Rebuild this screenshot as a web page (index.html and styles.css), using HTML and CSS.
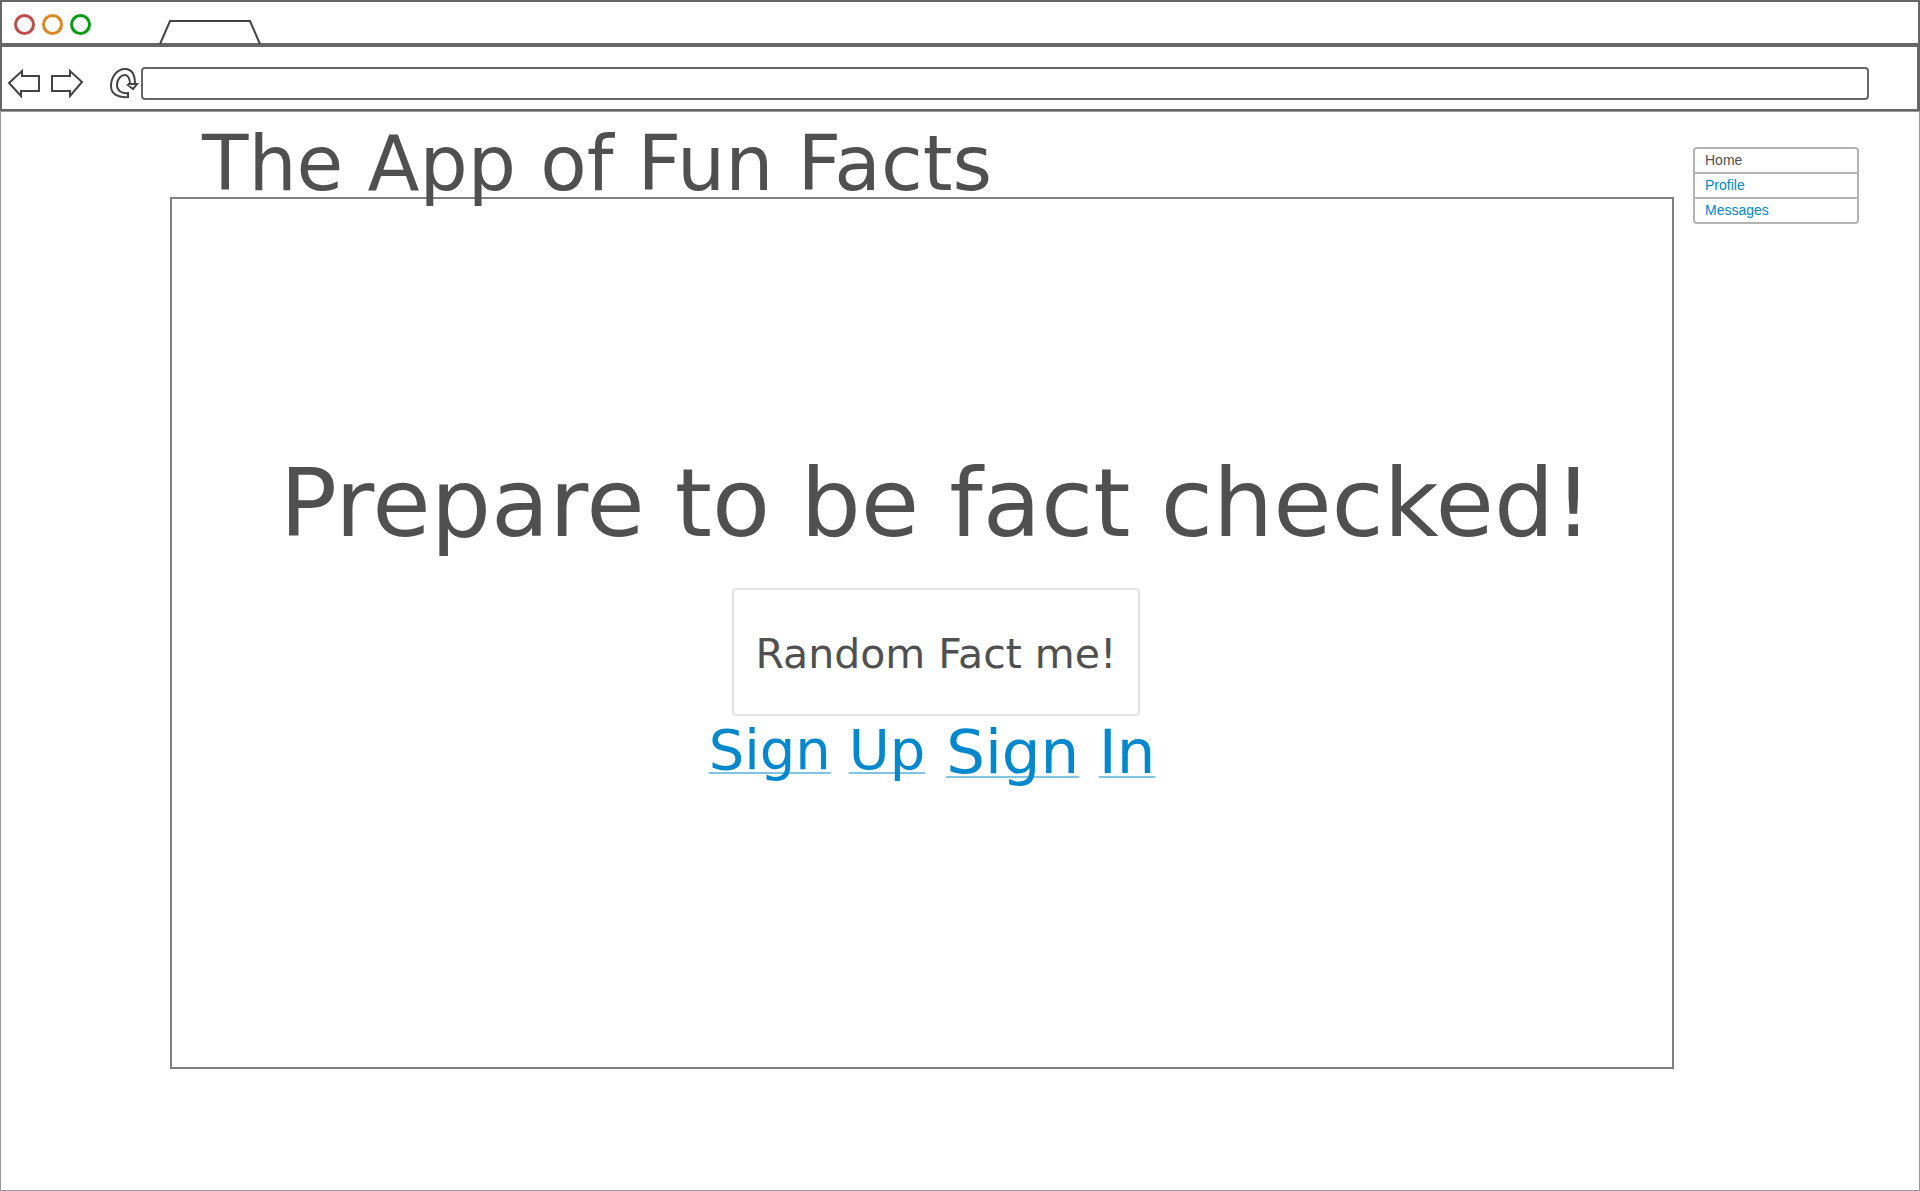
FILE: index.html
```html
<!DOCTYPE html>
<html lang="en">
<head>
<meta charset="utf-8">
<title>The App of Fun Facts</title>
<link rel="stylesheet" href="styles.css">
</head>
<body>
<div class="browser">
  <div class="tab-bar">
    <span class="dot dot-red"></span>
    <span class="dot dot-amber"></span>
    <span class="dot dot-green"></span>
    <svg class="tab" width="104" height="26" viewBox="0 0 104 26" aria-hidden="true"><path d="M2 25 12 2H92L102 25"/></svg>
  </div>
  <div class="toolbar">
    <button class="tool" aria-label="Back"><svg width="34" height="30" viewBox="0 0 34 30"><path d="M2 15 15 3V8H32V23H14V28Z"/></svg></button>
    <button class="tool tool-forward" aria-label="Forward"><svg width="34" height="30" viewBox="0 0 34 30"><path d="M2 8H20V3L32 14 20 28V23H2Z"/></svg></button>
    <button class="tool tool-reload" aria-label="Reload"><svg width="30" height="32" viewBox="0 0 30 32"><path d="M19 30V26C12 27 8 23 8 18 8 12 12 8 16 8 19 8 21 12 21 17L19 18 24 22 28 17H26C26 7 22 2 16 2 8 2 2 10 2 19 2 27 9 31 19 30ZM19 17H29"/></svg></button>
    <input class="address" type="text" aria-label="Address">
  </div>
  <div class="page">
    <main class="content">
      <h1 class="title">The App of Fun Facts</h1>
      <section class="panel">
        <h2 class="headline">Prepare to be fact checked!</h2>
        <button class="fact-button">Random Fact me!</button>
        <div class="links">
          <a class="link sign-up" href="#"><span>Sign</span> <span>Up</span></a>
          <a class="link sign-in" href="#"><span>Sign</span> <span>In</span></a>
        </div>
      </section>
    </main>
    <nav class="menu">
      <a class="menu-item current" href="#">Home</a>
      <a class="menu-item" href="#">Profile</a>
      <a class="menu-item" href="#">Messages</a>
    </nav>
  </div>
</div>
</body>
</html>
```
FILE: styles.css
```css
* { box-sizing: border-box; }

body {
  margin: 0;
  background: #fff;
  color: #505050;
  font-family: Verdana, "DejaVu Sans", sans-serif;
}

button {
  font: inherit;
  color: inherit;
  background: none;
}

.browser {
  min-height: 100vh;
  display: flex;
  flex-direction: column;
}

.tab-bar {
  height: 47px;
  display: flex;
  align-items: center;
  gap: 7px;
  padding-left: 12px;
  border: 2px solid #666;
  border-bottom-width: 4px;
}

.dot {
  width: 21px;
  height: 21px;
  margin-bottom: -4px;
  border: 3px solid;
  border-radius: 50%;
}

.dot-red { color: #c04b4b; }
.dot-amber { color: #dd8822; }
.dot-green { color: #009e0f; }

.tab {
  align-self: flex-end;
  margin: 0 0 -2px 60px;
}

svg {
  display: block;
  fill: none;
  stroke: #444;
  stroke-width: 2;
}

.toolbar {
  height: 64px;
  display: flex;
  align-items: center;
  padding: 10px 48px 0 5px;
  border: solid #666;
  border-width: 0 3px 2px 2px;
}

.tool {
  padding: 0;
  border: 0;
}

.tool-forward { margin-left: 9px; }
.tool-reload { margin: 0 2px 0 25px; }

.address {
  flex: 1;
  min-width: 0;
  height: 33px;
  border: 2px solid #666;
  border-radius: 4px;
  background: #fff;
}

.page {
  flex: 1;
  display: grid;
  grid-template-columns: minmax(0, 1fr) 166px;
  column-gap: 19px;
  padding: 22px 60px 121px 169px;
  border: 1px solid #999;
}

.content {
  display: flex;
  flex-direction: column;
}

.title {
  position: relative;
  z-index: 1;
  margin: 0 0 3px 32px;
  font-size: 76px;
  font-weight: 400;
  line-height: 60px;
}

.panel {
  flex: 1;
  display: flex;
  flex-direction: column;
  align-items: center;
  padding: 256px 0 64px 28px;
  border: 2px solid #808080;
}

.headline {
  margin: 0;
  font-size: 95px;
  font-weight: 400;
  line-height: 96px;
  text-align: center;
}

.fact-button {
  margin-top: 37px;
  height: 128px;
  padding: 3px 22px 0;
  border: 2px solid #e2e2e2;
  border-radius: 4px;
  font-size: 41px;
}

.links {
  display: flex;
  gap: 21px;
  padding-right: 8px;
}

.link {
  color: #0088ce;
  text-decoration: none;
}

.link span {
  text-decoration: underline 2px #80c4e6;
  text-underline-offset: 3px;
  text-decoration-skip-ink: none;
}

.sign-up {
  font-size: 56px;
  line-height: 68px;
}

.sign-in {
  font-size: 61px;
  line-height: 72px;
}

.menu {
  align-self: start;
  margin-top: 13px;
  border: 2px solid #b3b3b3;
  border-radius: 4px;
}

.menu-item {
  display: block;
  padding-left: 10px;
  color: #0088ce;
  font: 14px/23px "Liberation Sans", sans-serif;
  text-decoration: none;
}

.menu-item + .menu-item { border-top: 2px solid #b3b3b3; }
.menu-item.current { color: #505050; }
```
